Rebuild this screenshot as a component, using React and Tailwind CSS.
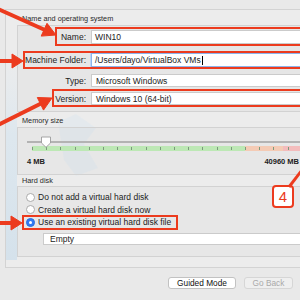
import React from "react";

const RED = "#ec3b1e";

function Field({ children, focus = false, h = "h-[14px]" }) {
  return (
    <div
      className={`${h} flex-1 flex items-center pl-[3px] bg-white border ${
        focus ? "border-[#8db4ec] shadow-[0_0_0_1px_#bcd5f6]" : "border-[#cbcbcb]"
      }`}
    >
      {children}
    </div>
  );
}

function Row({ label, children, className = "" }) {
  return (
    <div className={`flex items-center ${className}`}>
      <div className="w-[69px] text-right pr-[1px] text-[8.5px] leading-[10px] text-[#1c1c1c]">{label}</div>
      <div className="ml-[4px] flex-1 flex">{children}</div>
    </div>
  );
}

function Radio({ checked }) {
  return checked ? (
    <div className="w-[9px] h-[9px] rounded-full bg-[#2f7bf5] border border-[#2a6fdc] flex items-center justify-center">
      <div className="w-[3.5px] h-[3.5px] rounded-full bg-white" />
    </div>
  ) : (
    <div className="w-[9px] h-[9px] rounded-full bg-white border border-[#ababab]" />
  );
}

export default function App() {
  const ticks = [];
  for (let k = 0; k < 20; k++) ticks.push(5 + k * 14.2);
  return (
    <div className="relative w-[300px] h-[300px] overflow-hidden bg-[#e9e9e9] font-['Liberation_Sans',Arial,sans-serif] text-[#1c1c1c]">
      <div className="pt-[9px] pl-[5px]">
        <div className="relative w-[330px] h-[259px] bg-[#ececec] border border-[#d3d3d3] pl-[11px]">
          {/* watermark */}
          <svg className="absolute left-0 top-0 pointer-events-none" width="120" height="258" viewBox="0 0 120 258">
            <defs>
              <linearGradient id="wm" x1="0" y1="0" x2="0" y2="1">
                <stop offset="0" stopColor="#dfe9f1" stopOpacity="0" />
                <stop offset="0.4" stopColor="#d7e5ef" stopOpacity="0.7" />
                <stop offset="1" stopColor="#cfdfeb" stopOpacity="0.8" />
              </linearGradient>
            </defs>
            <polygon points="0,40 11,60 11,250 0,250" fill="url(#wm)" />
            <polygon points="52,112 70,104 90,118 78,134 92,158 70,166 58,150" fill="#dce7ef" opacity="0.45" />
          </svg>
          <div className="relative flex flex-col">
            <div className="pt-[4px] pl-[5px] h-[13px] text-[7.3px] leading-[9px] text-[#2a2a2a]">Name and operating system</div>
            <div className="mt-[2px] border border-[#d2d2d2] bg-[rgba(0,0,0,0.025)] pt-[4px] pb-[6px] flex flex-col">
              <Row label="Name:">
                <Field>
                  <span className="text-[8.5px] leading-[10px]">WIN10</span>
                </Field>
              </Row>
              <Row label="Machine Folder:" className="mt-[9px]">
                <Field focus>
                  <span className="text-[8.5px] leading-[10px]">/Users/dayo/VirtualBox VMs</span>
                  <span className="ml-[1px] w-[1px] h-[9px] bg-black" />
                </Field>
              </Row>
              <Row label="Type:" className="mt-[7px]">
                <Field h="h-[13px]">
                  <span className="text-[8.5px] leading-[10px] pl-[1px]">Microsoft Windows</span>
                </Field>
              </Row>
              <Row label="Version:" className="mt-[5px]">
                <Field h="h-[13px]">
                  <span className="text-[8.5px] leading-[10px] pl-[1px]">Windows 10 (64-bit)</span>
                </Field>
              </Row>
            </div>

            <div className="mt-[4px] pl-[5px] h-[9px] text-[7.3px] leading-[9px] text-[#2a2a2a]">Memory size</div>
            <div className="mt-[2px] border border-[#d2d2d2] bg-[rgba(0,0,0,0.02)] pt-[8px] pb-[8px] pl-[9px] flex flex-col">
              <div className="relative h-[16px]">
                <div className="absolute left-0 right-0 top-[5px] h-[1.5px] bg-[#b3b3b3]" />
                <div className="absolute left-[5px] top-[10px] h-[5px] right-0 flex">
                  <div className="w-[213px] bg-[#bde8b5]" />
                  <div className="w-[38px] bg-[#f4cbb5]" />
                  <div className="flex-1 bg-[#f3bcbc]" />
                </div>
                {ticks.map((x, i) => (
                  <div
                    key={i}
                    className="absolute top-[11px] w-[1px] h-[3px] bg-[#7d9a7d]"
                    style={{ left: x }}
                  />
                ))}
                <svg className="absolute left-[13px] top-[0px]" width="12" height="12" viewBox="0 0 12 12">
                  <path d="M1.5 1 H10.5 V7 L6 11.3 L1.5 7 Z" fill="#fff" stroke="#9c9c9c" strokeWidth="0.9" />
                </svg>
              </div>
              <div className="mt-[5px] h-[9px] w-[272px] flex justify-between text-[7.5px] leading-[9px] font-semibold text-[#222]">
                <span>4 MB</span>
                <span>40960 MB</span>
              </div>
            </div>

            <div className="mt-[1px] pl-[5px] h-[9px] text-[7.3px] leading-[9px] text-[#2a2a2a]">Hard disk</div>
            <div className="mt-[1px] border border-[#d2d2d2] bg-[rgba(0,0,0,0.02)] pt-[4px] pb-[11px] pl-[8px] flex flex-col">
              {[
                ["Do not add a virtual hard disk", false],
                ["Create a virtual hard disk now", false],
                ["Use an existing virtual hard disk file", true],
              ].map(([t, c]) => (
                <div key={t} className="h-[12.5px] flex items-center">
                  <Radio checked={c} />
                  <span className="ml-[3px] text-[8.5px] leading-[10px]">{t}</span>
                </div>
              ))}
              <div className="mt-[4.5px] ml-[17px] h-[12px] bg-white border border-[#cbcbcb] flex items-center pl-[6px]">
                <span className="text-[8.5px] leading-[10px]">Empty</span>
              </div>
            </div>
          </div>
        </div>
      </div>

      <div className="mt-[9px] flex justify-end pr-[7px] gap-[8px]">
        <div className="w-[68px] h-[12px] bg-white border border-[#c2c2c2] rounded-[3px] flex items-center justify-center text-[8.3px] leading-[10px] font-medium text-[#111]">
          Guided Mode
        </div>
        <div className="w-[49px] h-[12px] bg-[#efefef] border border-[#d6d6d6] rounded-[3px] flex items-center justify-center text-[8.3px] leading-[10px] text-[#a9a9a9]">
          Go Back
        </div>
      </div>

      {/* annotation boxes */}
      <div className="absolute left-[55px] top-[27px] w-[260px] h-[19px] border-2 border-[#ec3b1e]" />
      <div className="absolute left-[23px] top-[51px] w-[290px] h-[18px] border-2 border-[#ec3b1e]" />
      <div className="absolute left-[52px] top-[89px] w-[260px] h-[18px] border-2 border-[#ec3b1e]" />
      <div className="absolute left-[22px] top-[215px] w-[156px] h-[15px] border-2 border-[#ec3b1e]" />
      <div className="absolute left-[272px] top-[185px] w-[22px] h-[23px] border-2 border-[#ec3b1e] rounded-[4px] bg-white flex items-center justify-center text-[15px] leading-[15px] text-[#ec3b1e] font-['Liberation_Sans',Arial,sans-serif]">
        4
      </div>

      {/* arrows */}
      <svg className="absolute left-0 top-0 pointer-events-none" width="300" height="300" viewBox="0 0 300 300">
        <g fill={RED} stroke={RED} strokeLinejoin="round">
          <line x1="-2" y1="9" x2="45" y2="30" strokeWidth="4" />
          <polygon points="56,35 41.2,36.1 47,23.3" strokeWidth="1" />
          <line x1="-2" y1="61" x2="13" y2="61" strokeWidth="4" />
          <polygon points="23,61 12,54 12,68" strokeWidth="1" />
          <line x1="-2" y1="125" x2="41" y2="103.5" strokeWidth="4" />
          <polygon points="52,98 43.5,110.1 37.3,97.5" strokeWidth="1" />
          <line x1="-2" y1="223" x2="12" y2="223" strokeWidth="4" />
          <polygon points="22,223 11,216 11,230" strokeWidth="1" />
          <line x1="289" y1="187" x2="302" y2="170" strokeWidth="3" />
        </g>
      </svg>
    </div>
  );
}
